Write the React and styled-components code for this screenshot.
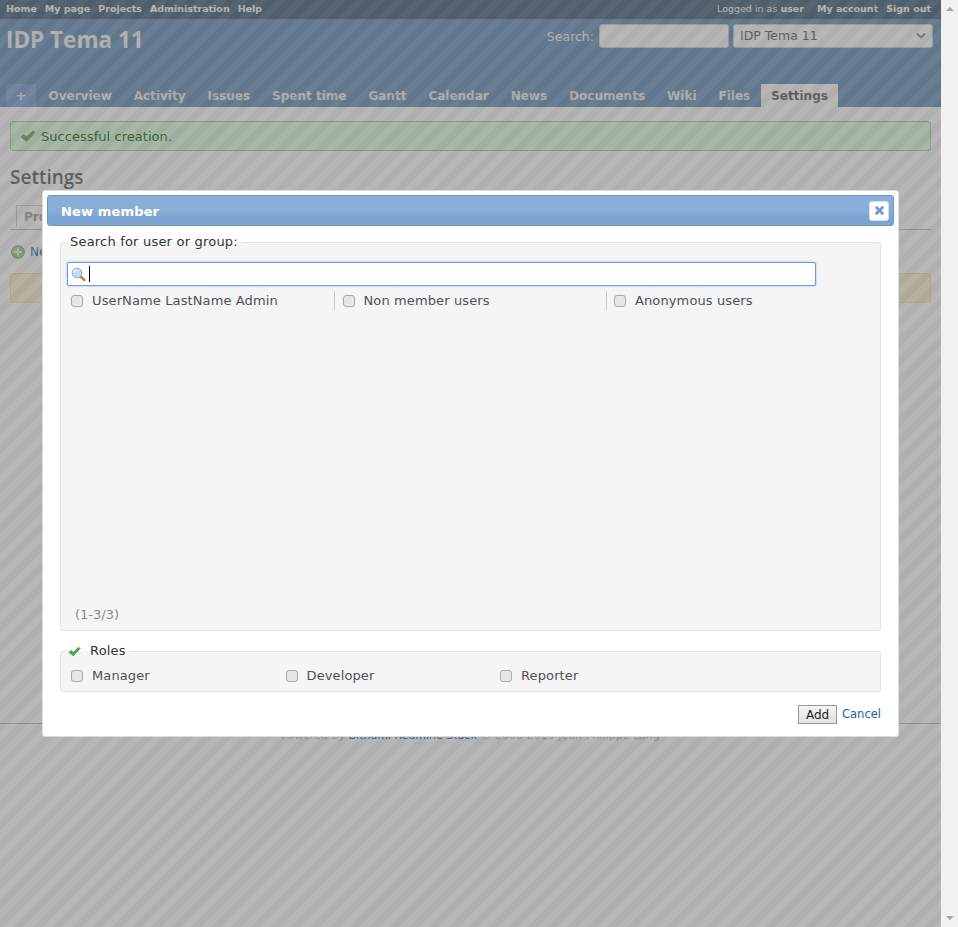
import styled, { createGlobalStyle } from "styled-components";

const GlobalStyle = createGlobalStyle`
  html, body { margin: 0; padding: 0; height: 100%; overflow: hidden; }
  body {
    font-family: "DejaVu Sans", Verdana, sans-serif;
    font-size: 12px;
    color: #333;
    background: #fff;
  }
`;

const Shell = styled.div`
  display: flex;
  height: 927px;
  position: relative;
  overflow: hidden;
`;

const Page = styled.div`
  width: 941px;
  height: 927px;
  background: #fff;
  display: flex;
  flex-direction: column;
`;

const TopMenu = styled.div`
  height: 19px;
  padding: 0 10px 2px 6px;
  box-sizing: border-box;
  background: #3e5b76;
  color: #fff;
  font-size: 9.5px;
  font-weight: bold;
  display: flex;
  justify-content: space-between;
  align-items: center;
`;

const TopLinks = styled.div`
  display: flex;
  gap: 8px;
`;

const LoggedAs = styled.span`
  font-weight: normal;
  margin-right: 5px;
  b { font-weight: bold; }
`;

const Header = styled.div`
  height: 88px;
  background: #628db6;
  position: relative;
  display: flex;
  justify-content: space-between;
  padding: 5px 8px 0 6px;
  box-sizing: border-box;
`;

const Title = styled.h1`
  margin: 1px 0 0;
  font-family: "Open Sans", "Noto Sans", sans-serif;
  font-size: 22.5px;
  line-height: 30px;
  font-weight: bold;
  color: #f8f8f8;
`;

const QuickSearch = styled.div`
  display: flex;
  align-items: center;
  height: 24px;
  color: #f8f8f8;
  font-size: 12.5px;
`;

const SearchInput = styled.div`
  width: 128px;
  height: 22px;
  margin: 0 4px 0 5px;
  background: #fff;
  border: 1px solid #ccc;
  border-radius: 3px;
`;

const ProjectSelect = styled.div`
  width: 186px;
  height: 21px;
  padding: 0 6px 1px;
  background: #fff;
  border: 1px solid #ccc;
  border-radius: 3px;
  color: #555;
  display: flex;
  align-items: center;
  justify-content: space-between;
`;

const MainMenu = styled.div`
  position: absolute;
  left: 6px;
  bottom: 0;
  display: flex;
  height: 23px;
  align-items: stretch;
`;

const MenuTab = styled.div`
  padding: 0 ${(p) => (p.$active ? "10px" : "11px")};
  font-size: 12px;
  font-weight: bold;
  line-height: 25px;
  color: ${(p) => (p.$active ? "#555" : "#f0f0f0")};
  background: ${(p) => (p.$active ? "#fff" : "transparent")};
`;

const PlusTab = styled.div`
  width: 30px;
  margin-right: 1.5px;
  text-align: center;
  font-weight: bold;
  font-size: 13px;
  line-height: 23px;
  color: #f0f0f0;
  background: #759fcf;
`;

const Content = styled.div`
  height: 616px;
  box-sizing: border-box;
  padding: 14px 10px 0;
  display: flex;
  flex-direction: column;
`;

const Flash = styled.div`
  height: 28px;
  border: 1px solid #9fcf9f;
  background: #dfffdf;
  color: #005f00;
  border-radius: 3px;
  display: flex;
  align-items: center;
  gap: 5px;
  padding-left: 9px;
  font-size: 13px;
  letter-spacing: 0.05px;
`;

const PageTitle = styled.h2`
  margin: 14px 0 0;
  font-family: "Open Sans", "Noto Sans", sans-serif;
  font-size: 19px;
  line-height: 24px;
  font-weight: 600;
  color: #555;
`;

const Tabs = styled.div`
  height: 24px;
  margin-top: 16px;
  border-bottom: 1px solid #bbb;
  padding-left: 6px;
`;

const TabItem = styled.div`
  display: inline-block;
  height: 23px;
  box-sizing: border-box;
  width: 60px;
  border: 1px solid #ccc;
  border-bottom: none;
  padding: 4px 0 0 7px;
  font-weight: bold;
  color: #999;
`;

const NewLink = styled.div`
  display: flex;
  align-items: center;
  gap: 5px;
  margin: 14px 0 0 1px;
  height: 16px;
  color: #169;
`;

const NoData = styled.div`
  height: 28px;
  margin-top: 13px;
  border: 1px solid #f0e0b0;
  background: #fff3cf;
  border-radius: 3px;
`;

const Footer = styled.div`
  border-top: 1px solid #bbb;
  text-align: center;
  font-size: 11px;
  line-height: 24px;
  color: #bbb;
  a { color: #169; }
`;

const Overlay = styled.div`
  position: absolute;
  inset: 0 17px 0 0;
  background: repeating-linear-gradient(
    135deg,
    rgba(111, 111, 111, 0.5) 0 6px,
    rgba(97, 97, 97, 0.5) 7px 13px,
    rgba(111, 111, 111, 0.5) 14px
  );
`;

const ScrollTrack = styled.div`
  width: 17px;
  height: 927px;
  background: #f1f1f1;
  display: flex;
  flex-direction: column;
  justify-content: space-between;
  align-items: center;
  padding: 7px 0;
  box-sizing: border-box;
`;

const Arrow = styled.div`
  width: 0;
  height: 0;
  border-left: 4px solid transparent;
  border-right: 4px solid transparent;
  ${(p) =>
    p.$down ? "border-top: 4px solid #a3a3a3;" : "border-bottom: 4px solid #a3a3a3;"}
`;

const Dialog = styled.div`
  position: absolute;
  left: 42px;
  top: 190px;
  width: 857px;
  height: 547px;
  box-sizing: border-box;
  background: #fff;
  border: 1px solid #ddd;
  border-radius: 3px;
  padding: 4px;
  display: flex;
  flex-direction: column;
`;

const DialogBar = styled.div`
  height: 31px;
  box-sizing: border-box;
  border: 1px solid #6f98c3;
  border-radius: 3px;
  background: linear-gradient(to bottom, #8aafd8 0%, #88add7 55%, #7da4d1 70%, #7ca3d1 100%);
  color: #fff;
  font-weight: bold;
  font-size: 13px;
  letter-spacing: 0.15px;
  padding: 1px 4px 0 13px;
  display: flex;
  align-items: center;
  justify-content: space-between;
`;

const CloseButton = styled.div`
  width: 20px;
  height: 20px;
  margin-top: -1px;
  box-sizing: border-box;
  background: #fff;
  border: 1px solid #ddd;
  border-radius: 3px;
  display: flex;
  align-items: center;
  justify-content: center;
`;

const DialogBody = styled.div`
  flex: 1;
  padding: 8px 13px 0;
  display: flex;
  flex-direction: column;
`;

const Group = styled.fieldset`
  margin: 0;
  padding: 0;
  border: 1px solid #e4e4e4;
  border-radius: 3px;
  background: #f5f5f5;
  height: ${(p) => p.$height}px;
  box-sizing: border-box;
  min-width: 0;
`;

const Legend = styled.legend`
  margin-left: 5px;
  padding: 0 4px;
  font-size: 13px;
  letter-spacing: 0.2px;
  color: #333;
  line-height: 16px;
  display: flex;
  align-items: center;
  gap: 9px;
`;

const SearchField = styled.div`
  width: 744px;
  height: 22px;
  margin: 12px 0 0 6px;
  background: #fff;
  border: 1px solid #6a9de8;
  border-radius: 2px;
  box-shadow: 0 0 2px #7aa8ee;
  display: flex;
  align-items: center;
  padding-left: 3px;
`;

const Caret = styled.span`
  width: 1px;
  height: 16px;
  background: #000;
  margin-left: 3px;
`;

const Principals = styled.div`
  display: flex;
  align-items: flex-start;
  height: 316px;
  margin: 5px 0 0 6px;
`;

const PrincipalCell = styled.label`
  display: flex;
  align-items: center;
  height: 19px;
  width: ${(p) => (p.$first ? "267px" : "271.5px")};
  box-sizing: border-box;
  padding-left: ${(p) => (p.$first ? "4px" : "7.5px")};
  border-left: ${(p) => (p.$first ? "none" : "1px solid #ccc")};
`;

const RoleRow = styled.div`
  display: flex;
  padding: 7px 0 0 10px;
`;

const RoleCell = styled.label`
  display: flex;
  align-items: center;
  width: 214.5px;
  height: 19px;
`;

const Box = styled.span`
  width: 10px;
  height: 10px;
  flex: none;
  border: 1px solid #a9a9a9;
  border-radius: 3px;
  background: #e6e6e6;
`;

const Label = styled.span`
  margin-left: 9px;
  font-size: 13px;
  letter-spacing: 0.12px;
  color: #505058;
`;

const Counter = styled.div`
  margin-left: 14px;
  font-size: 13px;
  color: #888;
`;

const Spacer = styled.div`
  height: 12px;
`;

const Actions = styled.div`
  display: flex;
  justify-content: flex-end;
  align-items: flex-start;
  margin-top: 13px;
  gap: 5px;
`;

const AddButton = styled.div`
  width: 39px;
  height: 19px;
  box-sizing: border-box;
  border: 1px solid #999;
  background: linear-gradient(#f4f4f4, #e2e2e2);
  font-size: 12px;
  line-height: 19px;
  text-align: center;
  color: #222;
`;

const CancelLink = styled.span`
  color: #169;
  font-size: 11.5px;
  line-height: 19px;
`;

const CheckSvg = styled.svg`
  flex: none;
  margin-left: ${(p) => p.$shift || 0}px;
`;

const Check = ({ size = 16, shift }) => (
  <CheckSvg width={size} height={size} viewBox="0 0 16 16" $shift={shift}>
    <path d="M1 9 L4 6.5 L6.5 9 L13 2.5 L15 4.5 L6.5 13.5 Z" fill="#52a447" stroke="#3d8a35" strokeWidth="0.5" />
  </CheckSvg>
);

const AddIcon = () => (
  <svg width="14" height="14" viewBox="0 0 14 14">
    <circle cx="7" cy="7" r="6.3" fill="#9ed08a" stroke="#5f9e4a" />
    <path d="M7 3.5v7M3.5 7h7" stroke="#fff" strokeWidth="2" />
  </svg>
);

const Magnifier = () => (
  <svg width="15" height="15" viewBox="0 0 15 15">
    <path d="M9.5 9.5l4 3.6" stroke="#c07f35" strokeWidth="2.4" strokeLinecap="round" />
    <circle cx="6" cy="6" r="4.8" fill="#c4dcf6" stroke="#86a9d2" />
    <path d="M3 5.5a3 3 0 0 1 3-2.5" stroke="#fff" strokeWidth="1.2" fill="none" />
  </svg>
);

const Chevron = () => (
  <svg width="10" height="7" viewBox="0 0 10 7">
    <path d="M1 1.5l4 4 4-4" stroke="#777" strokeWidth="1.8" fill="none" />
  </svg>
);

const CloseX = () => (
  <svg width="11" height="11" viewBox="0 0 11 11">
    <path d="M1.8 1.8l7.4 7.4M9.2 1.8l-7.4 7.4" stroke="#6f9bd0" strokeWidth="2.8" />
  </svg>
);

const menuItems = ["Overview", "Activity", "Issues", "Spent time", "Gantt", "Calendar", "News", "Documents", "Wiki", "Files"];
const principals = ["UserName LastName Admin", "Non member users", "Anonymous users"];
const roles = ["Manager", "Developer", "Reporter"];

const App = () => (
  <Shell>
    <GlobalStyle />
    <Page>
      <TopMenu>
        <TopLinks>
          <span>Home</span>
          <span>My page</span>
          <span>Projects</span>
          <span>Administration</span>
          <span>Help</span>
        </TopLinks>
        <TopLinks>
          <LoggedAs>
            Logged in as <b>user</b>
          </LoggedAs>
          <span>My account</span>
          <span>Sign out</span>
        </TopLinks>
      </TopMenu>
      <Header>
        <Title>IDP Tema 11</Title>
        <QuickSearch>
          Search:
          <SearchInput />
          <ProjectSelect>
            IDP Tema 11
            <Chevron />
          </ProjectSelect>
        </QuickSearch>
        <MainMenu>
          <PlusTab>+</PlusTab>
          {menuItems.map((item) => (
            <MenuTab key={item}>{item}</MenuTab>
          ))}
          <MenuTab $active>Settings</MenuTab>
        </MainMenu>
      </Header>
      <Content>
        <Flash>
          <Check />
          Successful creation.
        </Flash>
        <PageTitle>Settings</PageTitle>
        <Tabs>
          <TabItem>Pro</TabItem>
        </Tabs>
        <NewLink>
          <AddIcon />
          New
        </NewLink>
        <NoData />
      </Content>
      <Footer>
        Powered by <a>Bitnami Redmine Stack</a> © 2006-2019 Jean-Philippe Lang
      </Footer>
    </Page>
    <ScrollTrack>
      <Arrow />
      <Arrow $down />
    </ScrollTrack>
    <Overlay />
    <Dialog>
      <DialogBar>
        New member
        <CloseButton>
          <CloseX />
        </CloseButton>
      </DialogBar>
      <DialogBody>
        <Group $height={397}>
          <Legend>Search for user or group:</Legend>
          <SearchField>
            <Magnifier />
            <Caret />
          </SearchField>
          <Principals>
            {principals.map((name, i) => (
              <PrincipalCell key={name} $first={i === 0}>
                <Box />
                <Label>{name}</Label>
              </PrincipalCell>
            ))}
          </Principals>
          <Counter>(1-3/3)</Counter>
        </Group>
        <Spacer />
        <Group $height={49}>
          <Legend>
            <Check size={13} shift={-2} />
            Roles
          </Legend>
          <RoleRow>
            {roles.map((role) => (
              <RoleCell key={role}>
                <Box />
                <Label>{role}</Label>
              </RoleCell>
            ))}
          </RoleRow>
        </Group>
        <Actions>
          <AddButton>Add</AddButton>
          <CancelLink>Cancel</CancelLink>
        </Actions>
      </DialogBody>
    </Dialog>
  </Shell>
);

export default App;
